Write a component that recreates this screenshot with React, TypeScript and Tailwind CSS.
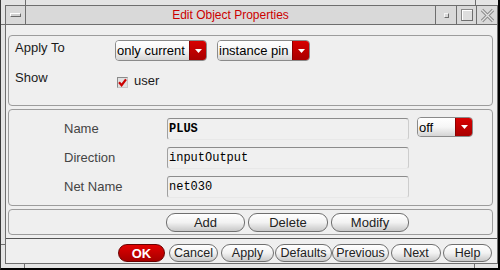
import React from "react";

function Dropdown({ label, cls }: { label: string; cls: string }) {
  return (
    <div className={`flex rounded-[4px] border border-[#8a8a8a] overflow-hidden ${cls}`}>
      <div className="flex-1 flex items-center pl-[1px] bg-linear-to-b from-white via-[#f6f6f6] to-[#d4d4d4] text-[13px] text-black leading-none whitespace-nowrap">
        {label}
      </div>
      <div className="w-[17px] flex items-center justify-center bg-linear-to-b from-[#d80000] to-[#a80000] border-l border-l-[#8a0000]">
        <svg width="7" height="4" viewBox="0 0 7 4">
          <polygon points="0,0 7,0 3.5,4" fill="white" />
        </svg>
      </div>
    </div>
  );
}

function Field({ text, bold }: { text: string; bold?: boolean }) {
  return (
    <div
      className={`w-[242px] h-[22px] rounded-[3px] border border-t-[#8c8c8c] border-l-[#a0a0a0] border-r-[#cdcdcd] border-b-[#e8e8e8] bg-[#f0f0f0] flex items-center pl-[1px] font-['Liberation_Mono',monospace] text-[12px] text-black leading-none ${bold ? "font-bold" : ""}`}
    >
      {text}
    </div>
  );
}

function Btn({ label, cls }: { label: string; cls: string }) {
  return (
    <div
      className={`flex items-center justify-center rounded-[9px] border border-[#6f6f6f] bg-linear-to-b from-white via-[#f2f2f2] to-[#c8c8c8] text-[#222] leading-none whitespace-nowrap ${cls}`}
    >
      {label}
    </div>
  );
}

export default function App() {
  return (
    <div className="relative w-[500px] h-[270px] bg-[#e4e4e4] border-l border-l-[#3a3a3a] border-r-2 border-r-black border-b-2 border-b-black pt-[5px] pl-[4px] pb-[4px] font-['Liberation_Sans',Arial,sans-serif] overflow-hidden">
      {/* frame resize-handle marks */}
      <div className="absolute left-[24px] top-0 w-px h-[5px] bg-[#6e6e6e]" />
      <div className="absolute left-[474px] top-0 w-px h-[5px] bg-[#6e6e6e]" />
      <div className="absolute left-0 top-[24px] w-[4px] h-px bg-[#6e6e6e]" />
      <div className="absolute left-0 top-[244px] w-[4px] h-px bg-[#6e6e6e]" />
      <div className="absolute left-[23px] top-[264px] w-px h-[4px] bg-[#6e6e6e]" />
      <div className="absolute left-[473px] top-[264px] w-px h-[4px] bg-[#6e6e6e]" />

      <div className="w-full h-full border border-[#6e6e6e] flex flex-col">
        {/* title bar */}
        <div className="h-[19px] flex border-b border-b-[#6e6e6e] bg-[#d9d9d9]">
          <div className="w-[20px] border-r border-r-[#6e6e6e] flex items-center justify-center">
            <div className="w-[11px] h-[4px] border border-t-white border-l-white border-b-[#6a6a6a] border-r-[#6a6a6a] bg-[#d0d0d0]" />
          </div>
          <div className="flex-1 flex items-center justify-center text-[12px] text-[#cc0000] leading-none">
            Edit Object Properties
          </div>
          <div className="w-[21px] border-l border-l-[#6e6e6e] flex items-center justify-center">
            <div className="w-[5px] h-[5px] border border-t-[#f4f4f4] border-l-[#f4f4f4] border-r-[#6e6e6e] border-b-[#6e6e6e] bg-[#d9d9d9]" />
          </div>
          <div className="w-[20px] border-l border-l-[#6e6e6e] flex items-center justify-center">
            <div className="w-[12px] h-[12px] border border-t-[#8a8a8a] border-l-[#8a8a8a] border-r-[#6e6e6e] border-b-[#6e6e6e] bg-[#dedede] shadow-[inset_1px_1px_0_#ffffff]" />
          </div>
          <div className="w-[21px] border-l border-l-[#6e6e6e] flex items-center justify-center">
            <svg width="15" height="15" viewBox="0 0 15 15">
              <path d="M2 2 L13 13 M13 2 L2 13" stroke="#8c8c8c" strokeWidth="3.2" fill="none" />
              <path d="M2 2 L13 13 M13 2 L2 13" stroke="#e2e2e2" strokeWidth="1.2" fill="none" />
            </svg>
          </div>
        </div>

        {/* content */}
        <div className="flex-1 flex flex-col bg-[#efefef]">
          <div className="flex flex-col pt-[10px] pl-[2px] pr-[4px] pb-[3px] gap-[3px]">
            {/* group 1 */}
            <div className="h-[71px] rounded-[4px] border border-[#9c9c9c] flex flex-col pt-[4px] pl-[6px]">
              <div className="flex items-start h-[21px]">
                <span className="w-[100px] text-[13px] leading-[15px] text-[#1a1a1a]">Apply To</span>
                <Dropdown label="only current" cls="w-[92px] h-[21px]" />
                <div className="ml-[10px]">
                  <Dropdown label="instance pin" cls="w-[93px] h-[21px]" />
                </div>
              </div>
              <div className="flex items-start mt-[9px] h-[20px]">
                <span className="w-[102px] text-[13px] leading-[15px] text-[#1a1a1a]">Show</span>
                <div className="mt-[7px] w-[11px] h-[11px] border border-t-[#8a8a8a] border-l-[#8a8a8a] border-r-[#c8c8c8] border-b-[#c8c8c8] bg-[#e0e0e0] flex items-center justify-center">
                  <svg width="9" height="9" viewBox="0 0 9 9">
                    <path d="M1 4.2 L3.6 7.2 L8 1.4" stroke="#cc0000" strokeWidth="2.2" fill="none" />
                  </svg>
                </div>
                <span className="ml-[6px] mt-[3px] text-[13px] leading-[15px] text-[#1a1a1a]">user</span>
              </div>
            </div>

            {/* group 2 */}
            <div className="h-[97px] rounded-[4px] border border-[#9c9c9c] flex flex-col pt-[8px] pl-[55px] gap-[7px]">
              <div className="flex items-center h-[22px]">
                <span className="w-[103px] text-[13px] text-[#444]">Name</span>
                <Field text="PLUS" bold />
                <div className="ml-[8px] self-start -mt-[1px]">
                  <Dropdown label="off" cls="w-[56px] h-[20px]" />
                </div>
              </div>
              <div className="flex items-center h-[22px]">
                <span className="w-[103px] text-[13px] text-[#444]">Direction</span>
                <Field text="inputOutput" />
              </div>
              <div className="flex items-center h-[22px]">
                <span className="w-[103px] text-[13px] text-[#444]">Net Name</span>
                <Field text="net030" />
              </div>
            </div>

            {/* group 3 */}
            <div className="h-[26px] rounded-[4px] border border-[#9c9c9c] flex items-start pt-[3px] pl-[157px] gap-[3px]">
              <Btn label="Add" cls="w-[79px] h-[19px] text-[13px]" />
              <Btn label="Delete" cls="w-[80px] h-[19px] text-[13px]" />
              <Btn label="Modify" cls="w-[78px] h-[19px] text-[13px]" />
            </div>
          </div>

          <div className="h-px bg-[#555555]" />

          {/* bottom buttons */}
          <div className="flex-1 flex items-start pt-[5px] pl-[112px]">
            <div className="w-[47px] h-[18px] rounded-full border border-[#6a0000] bg-linear-to-b from-[#e20000] to-[#a60000] flex items-center justify-center text-white font-bold text-[13px] leading-none">
              OK
            </div>
            <Btn label="Cancel" cls="ml-[4px] w-[49px] h-[18px] text-[12.5px]" />
            <Btn label="Apply" cls="ml-[3px] w-[53px] h-[18px] text-[12.5px]" />
            <Btn label="Defaults" cls="ml-[1px] w-[57px] h-[18px] text-[12.5px]" />
            <Btn label="Previous" cls="w-[57px] h-[18px] text-[12.5px]" />
            <Btn label="Next" cls="ml-[2px] w-[50px] h-[18px] text-[12.5px]" />
            <Btn label="Help" cls="ml-[2px] w-[49px] h-[18px] text-[12.5px]" />
          </div>
        </div>
      </div>
    </div>
  );
}
